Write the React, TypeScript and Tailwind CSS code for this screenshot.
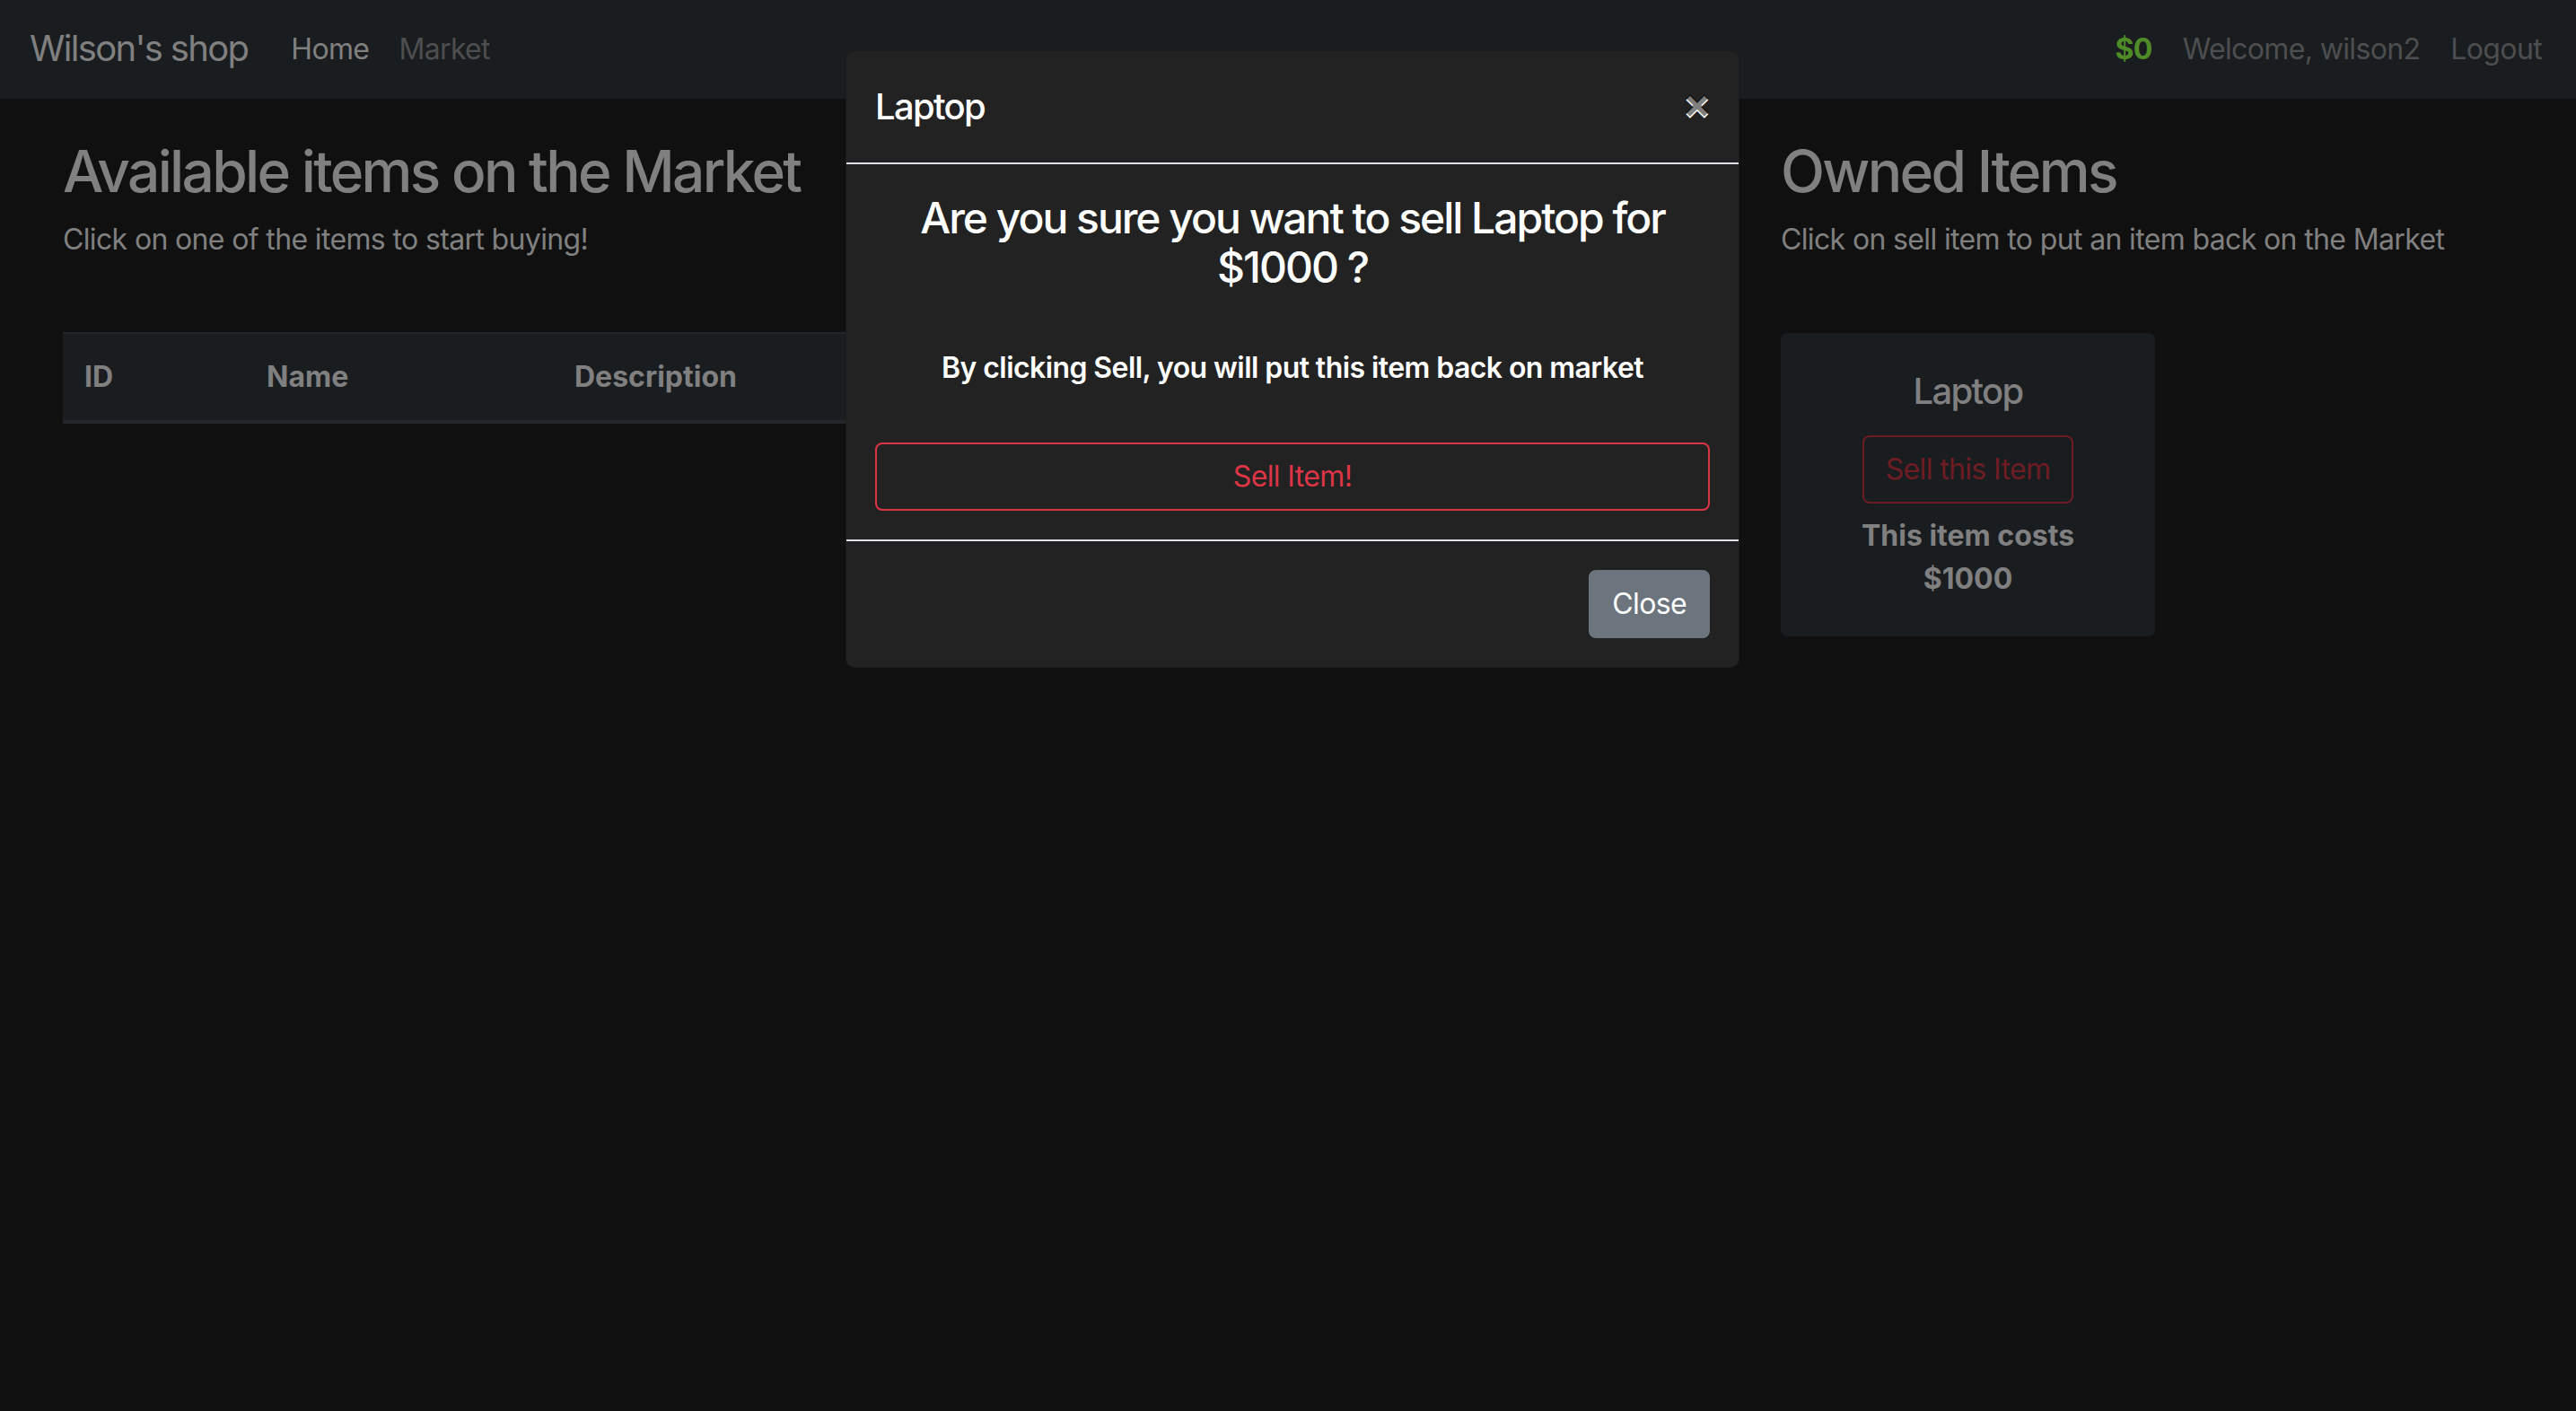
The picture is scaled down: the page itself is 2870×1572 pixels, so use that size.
export default function App() {
  return (
    <div
      className="min-h-screen w-full bg-[#101010] relative overflow-hidden"
      style={{ fontFamily: "Inter, 'Noto Sans', sans-serif" }}
    >
      {/* navbar (already dimmed by backdrop) */}
      <nav className="h-[110px] bg-[#1a1d20] flex items-center justify-between pl-[33px] pr-[38px]">
        <div className="flex items-center">
          <span className="text-[40px] leading-[60px] tracking-[-0.042em] text-[#808080] mr-[48px] -mt-[3px]">
            Wilson's shop
          </span>
          <div className="flex items-center gap-[33px] text-[32px] leading-[48px] tracking-[-0.02em]">
            <span className="text-[#808080]">Home</span>
            <span className="text-[#4d4e50]">Market</span>
          </div>
        </div>
        <div className="flex items-center gap-[34px] text-[32px] leading-[48px] tracking-[-0.02em]">
          <span className="font-bold text-[#4f8c27]">$0</span>
          <span className="text-[#4d4e50]">Welcome, wilson2</span>
          <span className="text-[#4d4e50]">Logout</span>
        </div>
      </nav>

      <div className="flex pl-[70px] pt-[42px] gap-[60px]">
        {/* market */}
        <div className="w-[1854px] shrink-0">
          <h2 className="text-[64px] leading-[77px] font-medium tracking-[-0.042em] text-[#808080]">
            Available items on the Market
          </h2>
          <p className="mt-[14px] text-[32px] leading-[48px] tracking-[-0.02em] text-[#808080]">
            Click on one of the items to start buying!
          </p>
          <table className="mt-[79px] w-full border-collapse text-[32px] leading-[48px] text-[#808080]">
            <thead>
              <tr className="bg-[#1a1d20] border-t-2 border-b-4 border-[#23272b]">
                <th className="w-[203px] px-[24px] py-[24px] text-left font-bold">ID</th>
                <th className="w-[343px] px-[24px] py-[24px] text-left font-bold">Name</th>
                <th className="w-[600px] px-[24px] py-[24px] text-left font-bold">Description</th>
                <th className="px-[24px] py-[24px]"></th>
              </tr>
            </thead>
          </table>
        </div>

        {/* owned */}
        <div className="flex-1">
          <h2 className="text-[64px] leading-[77px] font-medium tracking-[-0.042em] text-[#808080]">Owned Items</h2>
          <p className="mt-[14px] text-[32px] leading-[48px] tracking-[-0.02em] text-[#808080]">
            Click on sell item to put an item back on the Market
          </p>
          <div className="mt-[80px] w-[417px] rounded-[8px] bg-[#1a1d20] pt-[41px] pb-[40px] px-[40px] flex flex-col items-center text-center">
            <h5 className="text-[40px] leading-[48px] font-medium tracking-[-0.042em] text-[#808080]">Laptop</h5>
            <div className="mt-[25px] border-2 border-[#6e1c23] rounded-[8px] px-[24px] py-[12px] text-[32px] leading-[48px] tracking-[-0.02em] text-[#6e1c23]">
              Sell this Item
            </div>
            <p className="mt-[12px] text-[32px] leading-[48px] font-bold text-[#808080]">
              This item costs
              <br />
              $1000
            </p>
          </div>
        </div>
      </div>

      {/* modal */}
      <div className="absolute left-[942px] top-[56px] w-[996px] rounded-[10px] bg-[#222222] border border-black/20 text-white">
        <div className="flex items-start justify-between px-[32px] py-[32px] border-b-2 border-[#dee2e6]">
          <h5 className="text-[40px] leading-[60px] font-medium tracking-[-0.042em]">Laptop</h5>
          <span className="text-[48px] leading-[48px] font-bold text-black/50 mt-[1px] -mr-[2px] [text-shadow:0_2px_0_#fff]">
            ×
          </span>
        </div>
        <div className="p-[32px] text-center">
          <h4 className="text-[48px] leading-[55px] font-medium tracking-[-0.042em]">
            Are you sure you want to sell Laptop for
            <br />
            $1000 ?
          </h4>
          <p className="mt-[61px] text-[32px] leading-[48px] font-semibold tracking-[-0.018em]">
            By clicking Sell, you will put this item back on market
          </p>
          <div className="mt-[59px] w-full border-2 border-[#dc3545] rounded-[8px] py-[12px] text-[32px] leading-[48px] tracking-[-0.02em] text-[#dc3545]">
            Sell Item!
          </div>
        </div>
        <div className="flex justify-end px-[24px] py-[24px] border-t-2 border-[#dee2e6]">
          <div className="m-[8px] rounded-[8px] bg-[#6c757d] border-2 border-[#6c757d] px-[24px] py-[12px] text-[32px] leading-[48px] tracking-[-0.02em] text-white">
            Close
          </div>
        </div>
      </div>
    </div>
  );
}
